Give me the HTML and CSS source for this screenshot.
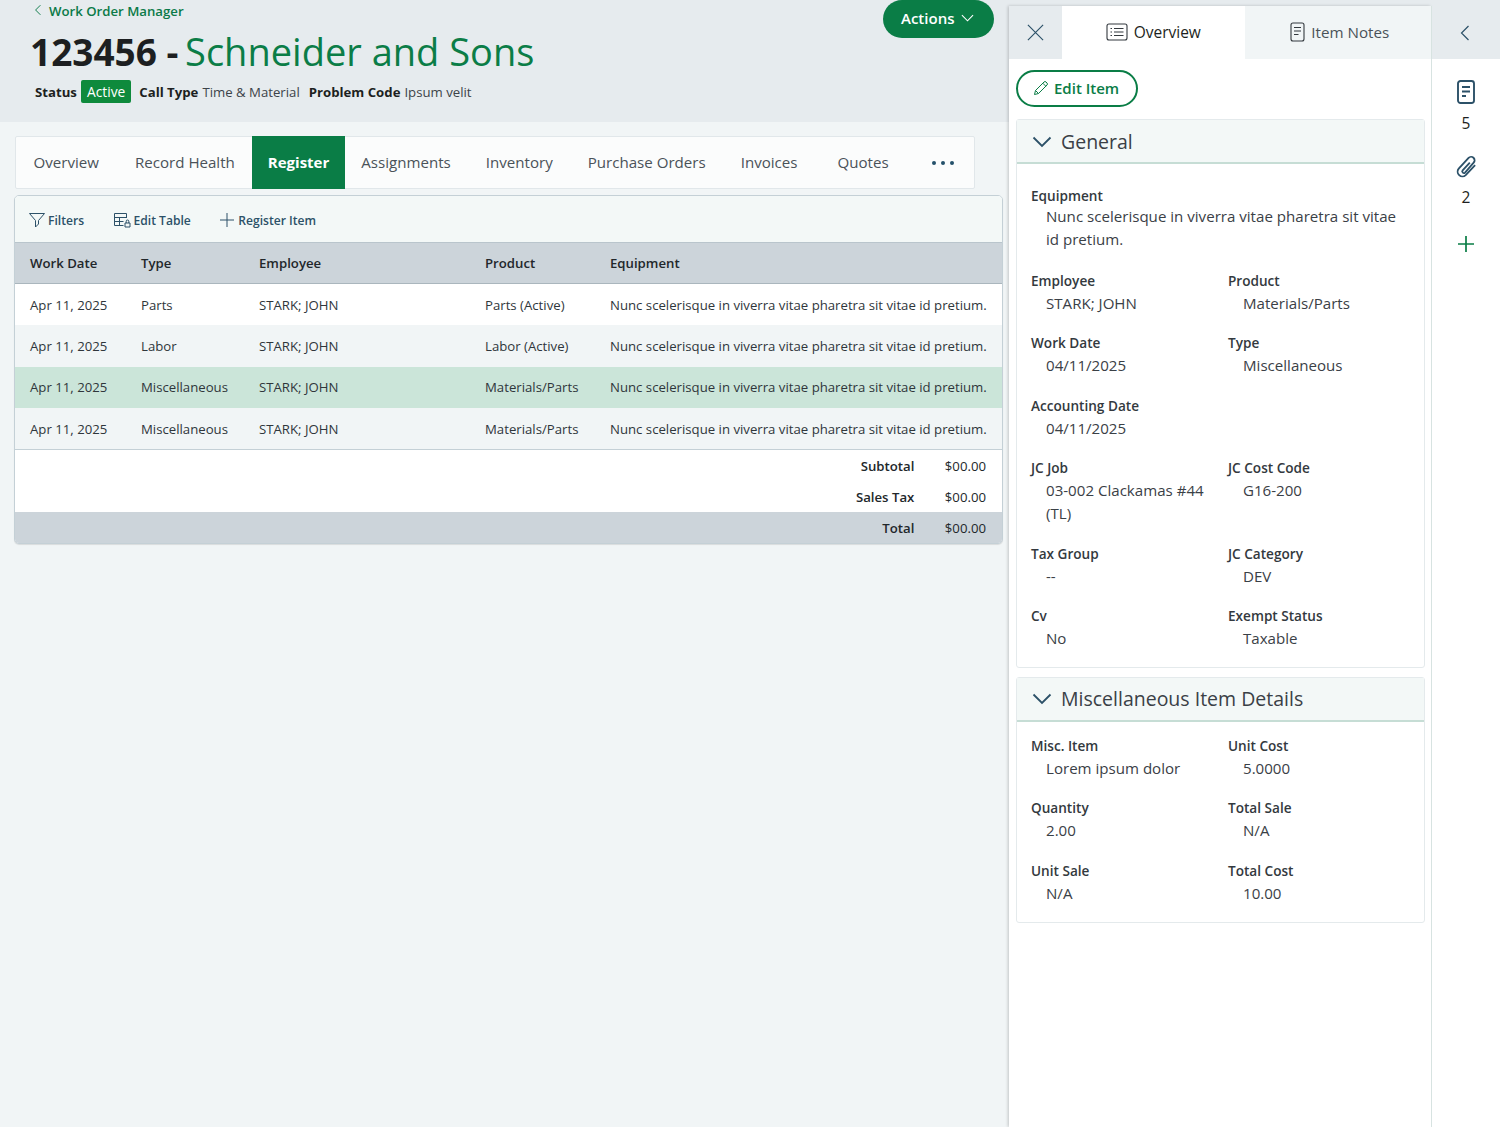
FILE: index.html
```html
<!DOCTYPE html>
<html lang="en">
<head>
    <meta charset="UTF-8">
    <meta name="viewport" content="width=device-width, initial-scale=1.0">
    <title>Work Order Register</title>
    <link rel="stylesheet" href="styles.css">
</head>
<body>
    <div class="page">
        <main class="main">
            <header class="record-header">
                <div class="record-top">
                    <div>
                        <a class="back-link" href="#">
                            <svg class="back-icon" viewBox="0 0 10 16"><path d="M8 2 2 8l6 6"/></svg>
                            Work Order Manager
                        </a>
                        <h1 class="record-title">123456 - <span class="record-name">Schneider and Sons</span></h1>
                    </div>
                    <button class="actions-btn">
                        Actions
                        <svg class="actions-icon" viewBox="0 0 14 8"><path d="M1 1l6 6 6-6"/></svg>
                    </button>
                </div>
                <div class="record-meta">
                    <b>Status</b><span class="status-badge">Active</span>
                    <b>Call Type</b><span class="meta-value">Time &amp; Material</span>
                    <b>Problem Code</b><span class="meta-value">Ipsum velit</span>
                </div>
            </header>

            <nav class="tabs">
                <a class="tab" href="#">Overview</a>
                <a class="tab" href="#">Record Health</a>
                <a class="tab active" href="#">Register</a>
                <a class="tab" href="#">Assignments</a>
                <a class="tab" href="#">Inventory</a>
                <a class="tab" href="#">Purchase Orders</a>
                <a class="tab" href="#">Invoices</a>
                <a class="tab quotes" href="#">Quotes</a>
                <span class="tab-more"><i></i><i></i><i></i></span>
            </nav>

            <section class="register">
                <div class="toolbar">
                    <a class="tool" href="#">
                        <svg class="tool-icon" viewBox="0 0 16 16"><path d="M.5 1.5h15l-6 7V12l-3 3V8.500z"/></svg>
                        Filters
                    </a>
                    <a class="tool" href="#">
                        <svg class="tool-icon wide" viewBox="0 0 18 16"><path d="M10.5 13.5h-9v-12h12V6M1.500 5.500h12M1.500 9.500h9M6.500 5.500v8M12 11h5v4h-5zM13.200 11V9.300a1.300 1.300 0 0 1 2.600 0V11"/></svg>
                        Edit Table
                    </a>
                    <a class="tool" href="#">
                        <svg class="tool-icon" viewBox="0 0 16 16"><path d="M8 1v14M1 8h14"/></svg>
                        Register Item
                    </a>
                </div>
                <table class="register-table">
                    <colgroup>
                        <col class="col-date"><col class="col-type"><col class="col-emp"><col class="col-prod"><col>
                    </colgroup>
                    <thead>
                        <tr><th>Work Date</th><th>Type</th><th>Employee</th><th>Product</th><th>Equipment</th></tr>
                    </thead>
                    <tbody>
                        <tr><td>Apr 11, 2025</td><td>Parts</td><td>STARK; JOHN</td><td>Parts (Active)</td><td>Nunc scelerisque in viverra vitae pharetra sit vitae id pretium.</td></tr>
                        <tr class="alt"><td>Apr 11, 2025</td><td>Labor</td><td>STARK; JOHN</td><td>Labor (Active)</td><td>Nunc scelerisque in viverra vitae pharetra sit vitae id pretium.</td></tr>
                        <tr class="selected"><td>Apr 11, 2025</td><td>Miscellaneous</td><td>STARK; JOHN</td><td>Materials/Parts</td><td>Nunc scelerisque in viverra vitae pharetra sit vitae id pretium.</td></tr>
                        <tr class="alt"><td>Apr 11, 2025</td><td>Miscellaneous</td><td>STARK; JOHN</td><td>Materials/Parts</td><td>Nunc scelerisque in viverra vitae pharetra sit vitae id pretium.</td></tr>
                    </tbody>
                </table>
                <div class="totals">
                    <div class="total-row"><b>Subtotal</b><span>$00.00</span></div>
                    <div class="total-row"><b>Sales Tax</b><span>$00.00</span></div>
                    <div class="total-row grand"><b>Total</b><span>$00.00</span></div>
                </div>
            </section>
        </main>

        <aside class="side">
            <div class="panel">
                <div class="panel-tabs">
                    <button class="panel-close">
                        <svg viewBox="0 0 20 20"><path d="M2 2l16 16M18 2 2 18"/></svg>
                    </button>
                    <a class="panel-tab active" href="#">
                        <svg class="panel-tab-icon wide" viewBox="0 0 22 18"><rect x="1" y="1" width="20" height="16" rx="2"/><path d="M4.500 5.500H6M4.500 9H6M4.500 12.500H6M8 5.500h9.500M8 9h9.500M8 12.500h9.500"/></svg>
                        Overview
                    </a>
                    <a class="panel-tab notes" href="#">
                        <svg class="panel-tab-icon" viewBox="0 0 15 20"><rect x="1" y="1" width="13" height="18" rx="2"/><path d="M4 5.500h7M4 9h7M4 12.500h4.500"/></svg>
                        Item Notes
                    </a>
                </div>
                <div class="panel-body">
                    <button class="edit-btn">
                        <svg class="edit-icon" viewBox="0 0 16 16"><path d="M1.500 14.500l1-4L11 2a1.400 1.400 0 0 1 2 0l1 1a1.400 1.400 0 0 1 0 2l-8.500 8.500zM2.500 10.500l3 3M9.800 3.200l3 3"/></svg>
                        Edit Item
                    </button>

                    <section class="card">
                        <h2 class="card-head">
                            <svg class="card-chevron" viewBox="0 0 20 12"><path d="M1.500 1.500 10 10l8.500-8.500"/></svg>
                            General
                        </h2>
                        <div class="fields general">
                            <div class="field full equipment"><label>Equipment</label><p>Nunc scelerisque in viverra vitae pharetra sit vitae id pretium.</p></div>
                            <div class="field"><label>Employee</label><p>STARK; JOHN</p></div>
                            <div class="field"><label>Product</label><p>Materials/Parts</p></div>
                            <div class="field"><label>Work Date</label><p>04/11/2025</p></div>
                            <div class="field"><label>Type</label><p>Miscellaneous</p></div>
                            <div class="field full"><label>Accounting Date</label><p>04/11/2025</p></div>
                            <div class="field"><label>JC Job</label><p>03-002 Clackamas #44 (TL)</p></div>
                            <div class="field"><label>JC Cost Code</label><p>G16-200</p></div>
                            <div class="field"><label>Tax Group</label><p>--</p></div>
                            <div class="field"><label>JC Category</label><p>DEV</p></div>
                            <div class="field"><label>Cv</label><p>No</p></div>
                            <div class="field"><label>Exempt Status</label><p>Taxable</p></div>
                        </div>
                    </section>

                    <section class="card">
                        <h2 class="card-head">
                            <svg class="card-chevron" viewBox="0 0 20 12"><path d="M1.500 1.500 10 10l8.500-8.500"/></svg>
                            Miscellaneous Item Details
                        </h2>
                        <div class="fields">
                            <div class="field"><label>Misc. Item</label><p>Lorem ipsum dolor</p></div>
                            <div class="field"><label>Unit Cost</label><p>5.0000</p></div>
                            <div class="field"><label>Quantity</label><p>2.00</p></div>
                            <div class="field"><label>Total Sale</label><p>N/A</p></div>
                            <div class="field"><label>Unit Sale</label><p>N/A</p></div>
                            <div class="field"><label>Total Cost</label><p>10.00</p></div>
                        </div>
                    </section>
                </div>
            </div>

            <div class="rail">
                <button class="rail-toggle">
                    <svg viewBox="0 0 10 16"><path d="M8.500 1 1.500 8l7 7"/></svg>
                </button>
                <div class="rail-items">
                    <div class="rail-item">
                        <svg class="rail-icon" viewBox="0 0 18 24"><rect x="1" y="1" width="16" height="22" rx="2.500"/><path d="M5 7h8M5 11.500h8M5 16h4"/></svg>
                        <span>5</span>
                    </div>
                    <div class="rail-item">
                        <svg class="rail-icon clip" viewBox="0 0 22 24"><path d="M15 8 7.500 16a1.700 1.700 0 0 0 2.500 2.300L19 8a3.600 3.600 0 0 0-5.300-4.900L3.400 14.200a5 5 0 0 0 7.300 6.800l9.800-10.500"/></svg>
                        <span>2</span>
                    </div>
                    <svg class="rail-add" viewBox="0 0 16 16"><path d="M8 0v16M0 8h16"/></svg>
                </div>
            </div>
        </aside>
    </div>
</body>
</html>
```

FILE: styles.css
```css
* {
    box-sizing: border-box;
}

body {
    margin: 0;
    font-family: 'Open Sans', 'Noto Sans', sans-serif;
    background-color: #f1f5f6;
    color: #2b2f33;
}

a {
    text-decoration: none;
    color: inherit;
}

button {
    font-family: inherit;
    cursor: pointer;
}

svg {
    display: block;
    fill: none;
    stroke: currentColor;
}

.page {
    display: flex;
    height: 1127px;
    overflow: hidden;
}

/* Left column */
.main {
    width: 1009px;
    flex: none;
}

.record-header {
    height: 122px;
    padding-right: 15px;
    background-color: #e6ebee;
}

.record-top {
    display: flex;
    justify-content: space-between;
    align-items: flex-start;
    height: 80px;
}

.back-link {
    display: flex;
    align-items: center;
    gap: 7px;
    height: 22px;
    padding-left: 34px;
    font-size: 13.2px;
    font-weight: 600;
    color: #0b7a48;
}

.back-icon {
    width: 8px;
    height: 14px;
    stroke-width: 1.2;
    margin-bottom: 2px;
}

.record-title {
    margin: 6px 0 0 30px;
    font-size: 37px;
    line-height: 46px;
    font-weight: 700;
    color: #1d1f21;
    white-space: nowrap;
}

.record-name {
    font-size: 38px;
    font-weight: 400;
    margin-left: -3px;
    color: #0b7d47;
}

.actions-btn {
    display: flex;
    align-items: center;
    gap: 7px;
    width: 111px;
    height: 38px;
    padding: 0 0 2px 18px;
    border: none;
    border-radius: 19px;
    background-color: #0a7d46;
    color: white;
    font-size: 15px;
    font-weight: 600;
}

.actions-icon {
    width: 13px;
    height: 8px;
    stroke-width: 1.2;
}

.record-meta {
    display: flex;
    align-items: center;
    padding-left: 35px;
    font-size: 13.2px;
    color: #1d1f21;
}

.record-meta b {
    font-weight: 700;
}

.status-badge {
    margin: 0 8px 0 4px;
    padding: 0 6px;
    font-size: 13.8px;
    line-height: 23px;
    border-radius: 2px;
    background-color: #0e8a3c;
    color: white;
}

.meta-value {
    margin: 0 9px 0 4px;
    font-size: 13.2px;
    color: #3c4349;
}

.tabs {
    display: flex;
    align-items: center;
    width: 960px;
    height: 53px;
    margin: 14px 0 6px 15px;
    border: 1px solid #e1e7ea;
    border-radius: 2px;
    background-color: #fbfcfc;
}

.tab {
    font-size: 15.1px;
    color: #4a5259;
    padding: 0 17.5px;
    line-height: 51px;
    white-space: nowrap;
}

.tab:first-child {
    padding-right: 18.5px;
}

.tab.quotes {
    margin-left: 5px;
}

.tab.active {
    height: 53px;
    line-height: 53px;
    margin: -1px -1px -1px 0;
    background-color: #0a7d46;
    color: white;
    font-size: 15px;
    font-weight: 700;
    padding: 0 15.5px;
}

.tab-more {
    display: flex;
    gap: 5px;
    margin-left: 26px;
}

.tab-more i {
    width: 4px;
    height: 4px;
    border-radius: 50%;
    background-color: #24506a;
}

/* Register table */
.register {
    width: 989px;
    margin-left: 14px;
    border: 1px solid #c4d0d6;
    border-radius: 5px;
    overflow: hidden;
    background-color: white;
    box-shadow: 0 1px 1px rgba(0, 0, 0, 0.1);
}

.toolbar {
    display: flex;
    align-items: center;
    gap: 28.5px;
    height: 47px;
    padding: 2px 0 0 14px;
    background-color: #f3f8f7;
    border-bottom: 1px solid #b9c5cc;
}

.tool {
    display: flex;
    align-items: center;
    gap: 3px;
    font-size: 12.1px;
    font-weight: 600;
    color: #2c5168;
}

.tool-icon {
    width: 16px;
    height: 16px;
    stroke-width: 1;
}

.tool-icon.wide {
    width: 18px;
}

.register-table {
    width: 100%;
    table-layout: fixed;
    border-collapse: collapse;
    font-size: 13.2px;
}

.col-date {
    width: 126px;
}

.col-type {
    width: 118px;
}

.col-emp {
    width: 226px;
}

.col-prod {
    width: 125px;
}

.register-table th {
    height: 40.5px;
    padding: 0 0 0 15px;
    text-align: left;
    font-weight: 600;
    color: #22272b;
    background-color: #ccd4da;
    border-bottom: 1px solid #aab6bd;
}

.register-table th + th,
.register-table td + td {
    padding-left: 0;
}

.register-table td {
    height: 41.5px;
    padding: 0 0 0 15px;
    color: #2f363b;
    white-space: nowrap;
}

.register-table tr.alt td {
    background-color: #f1f5f6;
}

.register-table tr.selected td {
    background-color: #cbe5d9;
}

.register-table tr:last-child td {
    border-bottom: 1px solid #c4d0d6;
}

.total-row {
    display: flex;
    justify-content: flex-end;
    align-items: center;
    height: 31px;
    padding-right: 16px;
    font-size: 13.2px;
    color: #22272b;
}

.total-row b {
    font-weight: 600;
    margin-right: 30.5px;
}

.total-row.grand {
    background-color: #ccd4da;
}

/* Right column */
.side {
    display: flex;
    flex: 1;
    padding-top: 6px;
    background: linear-gradient(#e6ebee 6px, white 6px);
}

.panel {
    width: 422px;
    flex: none;
    background-color: white;
    box-shadow: -1px 0 3px rgba(0, 0, 0, 0.2);
}

.panel-tabs {
    display: flex;
    height: 53px;
}

.panel-close {
    width: 53px;
    flex: none;
    padding: 0;
    display: flex;
    align-items: center;
    justify-content: center;
    border: none;
    background-color: #e6ebee;
    color: #2c5168;
}

.panel-close svg {
    width: 19px;
    height: 19px;
    stroke-width: 1.2;
}

.panel-tab {
    display: flex;
    align-items: center;
    justify-content: center;
    gap: 6px;
    flex: 1 1 0;
    padding-bottom: 2px;
    font-size: 15.2px;
    color: #4a5259;
    background-color: #f1f5f6;
}

.panel-tab.notes {
    padding-left: 4px;
}

.panel-tab.active {
    color: #1d1f21;
    font-size: 15.5px;
    font-weight: 500;
    background-color: white;
}

.panel-tab-icon {
    width: 15px;
    height: 20px;
    stroke-width: 1.1;
    color: #33393e;
}

.panel-tab-icon.wide {
    width: 22px;
    height: 18px;
}

.panel-body {
    padding: 11px 6px 0 7px;
}

.edit-btn {
    display: flex;
    align-items: center;
    gap: 5px;
    width: 122px;
    height: 37px;
    padding: 0 0 2px 15px;
    border: 2px solid #0a7d46;
    border-radius: 19px;
    background-color: white;
    color: #0a7d46;
    font-size: 15px;
    font-weight: 600;
}

.edit-icon {
    width: 16px;
    height: 16px;
    stroke-width: 1;
}

.card {
    margin-top: 12px;
    border: 1px solid #e4eaec;
    border-radius: 3px;
}

.card + .card {
    margin-top: 8.5px;
}

.card-head {
    display: flex;
    align-items: center;
    gap: 9px;
    height: 44px;
    margin: 0;
    padding-left: 15px;
    font-size: 19.5px;
    font-weight: 400;
    color: #3a4046;
    background-color: #f3f8f7;
    border-bottom: 2px solid #c6ddd5;
}

.card-chevron {
    width: 20px;
    height: 12px;
    margin-top: 1px;
    stroke-width: 1.8;
    color: #2c5168;
}

.fields {
    display: grid;
    grid-template-columns: 197px 1fr;
    padding: 13px 14px 17px;
}

.fields.general {
    padding-top: 21px;
}

.field {
    padding-bottom: 17.5px;
}

.field:nth-last-child(-n+2) {
    padding-bottom: 0;
}

.field.full {
    grid-column: 1 / -1;
}

.field label {
    display: block;
    font-size: 13.6px;
    line-height: 22px;
    font-weight: 600;
    color: #33393e;
}

.field p {
    margin: 0;
    padding-left: 15px;
    font-size: 15.1px;
    line-height: 23px;
    color: #3a4046;
}

.field.equipment p {
    margin: -2px 0 1px;
}

/* Rail */
.rail {
    flex: 1;
    border-left: 1px solid #d7e3e1;
    background-color: white;
}

.rail-toggle {
    display: flex;
    align-items: center;
    justify-content: center;
    width: 100%;
    height: 53px;
    padding: 0 3px 0 0;
    border: none;
    background-color: #e6ebee;
    color: #2c5168;
}

.rail-toggle svg {
    width: 10px;
    height: 16px;
    stroke-width: 1.2;
}

.rail-items {
    display: flex;
    flex-direction: column;
    align-items: center;
    padding-top: 21px;
    font-size: 15.5px;
    color: #1d1f21;
}

.rail-item {
    display: flex;
    flex-direction: column;
    align-items: center;
    gap: 9px;
    height: 75px;
}

.rail-item span {
    line-height: 20px;
}

.rail-icon {
    width: 18px;
    height: 24px;
    stroke-width: 1.9;
    color: #2c5168;
}

.rail-icon.clip {
    width: 22px;
    height: 23px;
    stroke-width: 1.9;
}

.rail-add {
    width: 16px;
    height: 16px;
    margin-top: 6px;
    stroke-width: 1.7;
    color: #0a7d46;
}
```
